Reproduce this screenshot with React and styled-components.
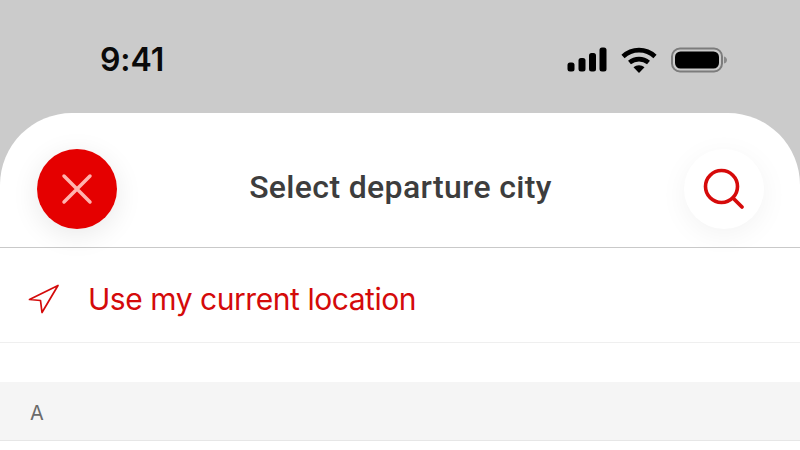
import React from "react";
import styled, { createGlobalStyle } from "styled-components";

const Global = createGlobalStyle`
  html, body { margin: 0; padding: 0; background: #fff; }
  #root { width: 800px; height: 450px; overflow: hidden; }
`;
const Page = styled.div`
  width: 800px; height: 450px; background: #cbcbcb; overflow: hidden;
  display: flex; flex-direction: column;
`;
const StatusBar = styled.div`
  height: 113px; flex: none; box-sizing: border-box; padding: 6px 73px 0 100px;
  display: flex; align-items: center; justify-content: space-between;
`;
const Time = styled.div`
  font: 600 32px/1 Inter, "Liberation Sans", sans-serif; color: #0a0a0a; letter-spacing: -0.1px;
`;
const StatusIcons = styled.div`
  display: flex; align-items: center; gap: 14px;
`;
const Sheet = styled.div`
  flex: 1; background: #fff; border-radius: 72px 72px 0 0;
  display: flex; flex-direction: column; overflow: hidden;
`;
const Header = styled.header`
  height: 135px; flex: none; box-sizing: border-box; padding: 18px 36px 0 37px;
  display: flex; align-items: center; justify-content: space-between;
  border-bottom: 1px solid #c9c9c9;
`;
const RoundButton = styled.button`
  width: 80px; height: 80px; border: 0; border-radius: 50%; padding: 0;
  display: flex; align-items: center; justify-content: center;
  background: ${p => (p.$primary ? "#e50000" : "#fff")};
  box-shadow: 0 6px 28px rgba(0,0,0,${p => (p.$primary ? 0.09 : 0.05)});
`;
const Title = styled.h1`
  margin: 0 0 4px; font: 500 32px/1 Roboto, "Liberation Sans", sans-serif; color: #3d3d3d; letter-spacing: 0.35px;
`;
const LocationRow = styled.div`
  height: 95px; flex: none; box-sizing: border-box; padding: 8px 0 0 28px;
  display: flex; align-items: center; gap: 28px; border-bottom: 1px solid #efefef;
`;
const LocationText = styled.span`
  font: 400 30px/1 Inter, "Liberation Sans", sans-serif; color: #d40a0a; letter-spacing: -0.45px;
`;
const Spacer = styled.div`
  height: 39px; flex: none;
`;
const SectionHeader = styled.div`
  height: 59px; flex: none; box-sizing: border-box; padding: 4px 0 0 30px;
  display: flex; align-items: center; background: #f5f5f5;
  border-bottom: 1px solid #e6e6e6;
  font: 400 20px/1 Inter, "Liberation Sans", sans-serif; color: #6b6b6b;
`;

export default function App() {
  return (
    <Page>
      <Global />
      <StatusBar>
        <Time>9:41</Time>
        <StatusIcons>
          <svg width="40" height="26" viewBox="0 0 40 26">
            <rect x="0.5" y="15.5" width="7" height="9" rx="2.5" fill="#000" />
            <rect x="11.5" y="11" width="7" height="13.5" rx="2.5" fill="#000" />
            <rect x="22" y="6" width="7" height="18.5" rx="2.5" fill="#000" />
            <rect x="32.5" y="0.5" width="7" height="24" rx="2.5" fill="#000" />
          </svg>
          <svg width="36" height="26" viewBox="0 0 36 26">
            <path d="M2 9.5C11 1 25 1 34 9.5" fill="none" stroke="#000" strokeWidth="4.6" strokeLinecap="butt" />
            <path d="M8.5 15.5C14 11 22 11 27.5 15.5" fill="none" stroke="#000" strokeWidth="4.6" />
            <path d="M12.5 20.2C15.5 17.5 20.5 17.5 23.5 20.2L18 26Z" fill="#000" />
          </svg>
          <svg width="56" height="26" viewBox="0 0 56 26">
            <rect x="1" y="1.5" width="50" height="23" rx="8" fill="none" stroke="#7c7c7c" strokeWidth="2" />
            <rect x="4" y="4.5" width="44" height="17" rx="5.5" fill="#000" />
            <path d="M53 9.5C55 10 56 11.5 56 13C56 14.5 55 16 53 16.5Z" fill="#8a8a8a" />
          </svg>
        </StatusIcons>
      </StatusBar>
      <Sheet>
        <Header>
          <RoundButton $primary aria-label="Close">
            <svg width="32" height="32" viewBox="0 0 32 32">
              <path d="M3 3L29 29M29 3L3 29" stroke="#ffb3ae" strokeWidth="3.5" strokeLinecap="round" />
            </svg>
          </RoundButton>
          <Title>Select departure city</Title>
          <RoundButton aria-label="Search">
            <svg width="42" height="42" viewBox="0 0 42 42">
              <circle cx="18.5" cy="18.5" r="16" fill="none" stroke="#d60a0a" strokeWidth="3.6" />
              <path d="M30 30L39 39" stroke="#d60a0a" strokeWidth="3.8" strokeLinecap="round" />
            </svg>
          </RoundButton>
        </Header>
        <LocationRow>
          <svg width="32" height="30" viewBox="0 0 32 30">
            <path d="M1.5 15.5L30 1.5L14 28.5L12.5 16.5Z" fill="none" stroke="#d40a0a" strokeWidth="1.7" strokeLinejoin="round" />
          </svg>
          <LocationText>Use my current location</LocationText>
        </LocationRow>
        <Spacer />
        <SectionHeader>A</SectionHeader>
      </Sheet>
    </Page>
  );
}
